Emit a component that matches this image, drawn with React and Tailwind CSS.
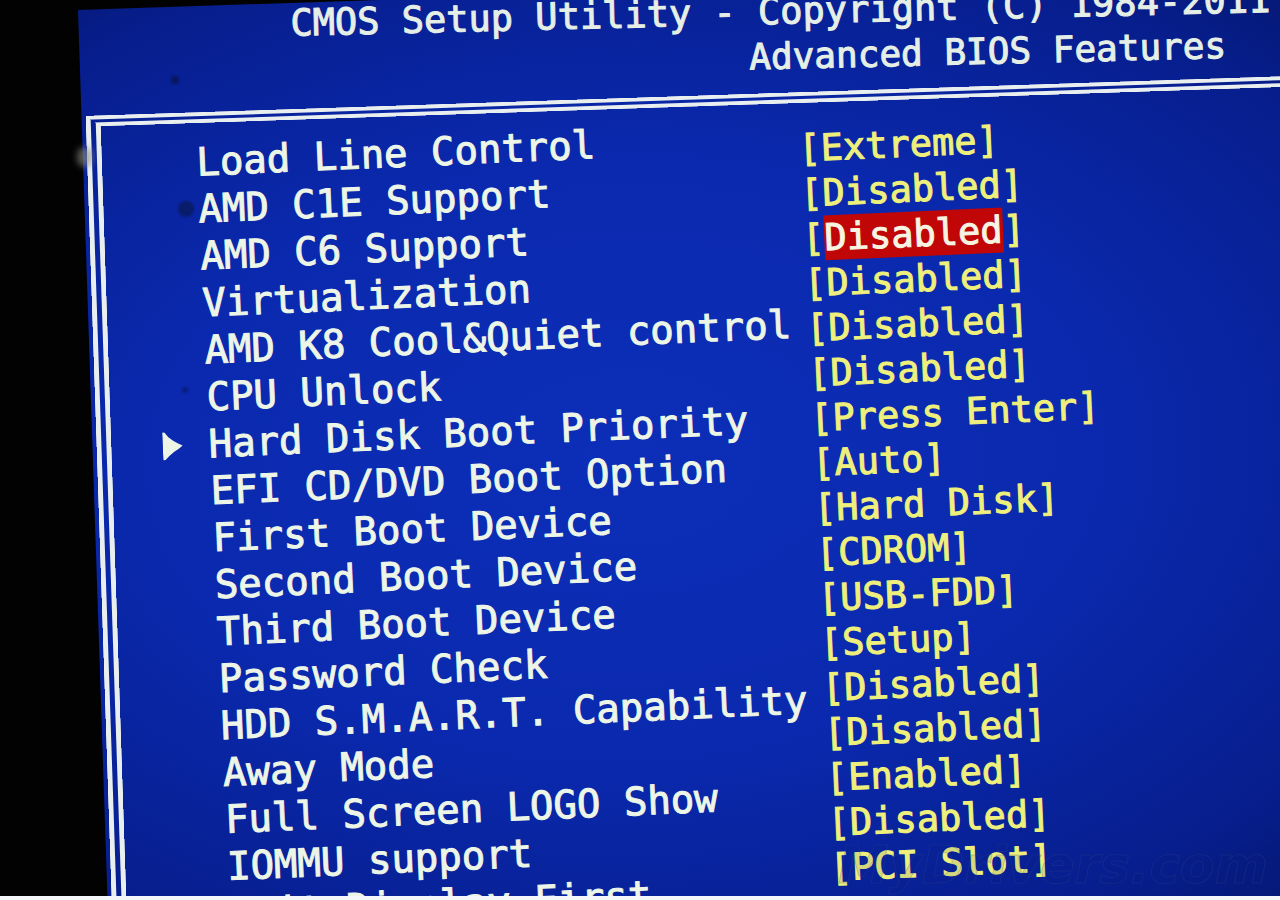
import React from "react";

const settings = [
  { label: "Load Line Control", value: "Extreme" },
  { label: "AMD C1E Support", value: "Disabled" },
  { label: "AMD C6 Support", value: "Disabled", selected: true },
  { label: "Virtualization", value: "Disabled" },
  { label: "AMD K8 Cool&Quiet control", value: "Disabled" },
  { label: "CPU Unlock", value: "Disabled" },
  { label: "Hard Disk Boot Priority", value: "Press Enter", submenu: true },
  { label: "EFI CD/DVD Boot Option", value: "Auto" },
  { label: "First Boot Device", value: "Hard Disk" },
  { label: "Second Boot Device", value: "CDROM" },
  { label: "Third Boot Device", value: "USB-FDD" },
  { label: "Password Check", value: "Setup" },
  { label: "HDD S.M.A.R.T. Capability", value: "Disabled" },
  { label: "Away Mode", value: "Disabled" },
  { label: "Full Screen LOGO Show", value: "Enabled" },
  { label: "IOMMU support", value: "Disabled" },
  { label: "Init Display First", value: "PCI Slot" },
];

function Header() {
  return (
    <header className="-mt-1 origin-top-left rotate-[0.5deg] pb-5 text-[#e6efe6]">
      <h1 className="pl-[212px] text-[37px] leading-[45px]">
        CMOS Setup Utility - Copyright (C) 1984-2011
      </h1>
      <h2 className="pl-[670px] text-[36px] leading-[45px]">Advanced BIOS Features</h2>
    </header>
  );
}

function Labels() {
  return (
    <ul className="w-[648px] shrink-0 text-[39px] leading-[47px] text-[#edf5e6]">
      {settings.map((s, i) => (
        <li key={s.label} className="flex items-center">
          <span className="w-[46px] shrink-0">
            {s.submenu && (
              <svg viewBox="0 0 20 28" className="h-7 w-5" fill="currentColor" aria-hidden="true">
                <path d="M0 0H2L6 5L11 9L16 12L20 14L16 17L11 20L6 24L2 28H0z" />
              </svg>
            )}
          </span>
          <span id={`setting-${i}`}>{s.label}</span>
        </li>
      ))}
    </ul>
  );
}

function Values() {
  return (
    <ul className="pt-[14px] text-[37px] leading-[45px] text-[#eff07c]">
      {settings.map((s, i) => (
        <li key={s.label}>
          <button type="button" aria-labelledby={`setting-${i} value-${i}`} className="block">
            <span id={`value-${i}`}>
              [
              <span className={s.selected ? "inline-block bg-[#c00606] text-[#f6f4e2]" : ""}>
                {s.value}
              </span>
              ]
            </span>
          </button>
        </li>
      ))}
    </ul>
  );
}

export default function App() {
  return (
    <div className="relative flex h-screen flex-col overflow-hidden border-b-4 border-[#f4f6fa] bg-[#020203] pl-[78px] pt-[10px]">
      <main className="-mr-16 flex grow origin-top-left rotate-[-1.9deg] flex-col whitespace-nowrap bg-[radial-gradient(ellipse_at_42%_50%,#0c2eb8_0%,#0a29ae_45%,#071e8e_80%,#04166c_100%)] font-['DejaVu_Sans_Mono',monospace] [-webkit-text-stroke:1px_currentColor]">
        <Header />
        <section className="ml-1 flex origin-top-left grow border-l-[15px] border-t-[11px] border-double border-[#e9efee] pl-12 pt-4">
          <div className="flex origin-top-left rotate-[-0.6deg]">
            <Labels />
            <Values />
          </div>
        </section>
      </main>
      <span className="absolute left-[171px] top-[76px] size-2 rounded-full bg-[#071552] opacity-80 blur-[1px]" />
      <span className="absolute left-[178px] top-[201px] size-4 rounded-full bg-[#0a1a5c] opacity-80 blur-[1px]" />
      <span className="absolute left-[182px] top-[387px] size-1.5 rounded-full bg-[#081a70] opacity-80 blur-[1px]" />
      <span className="absolute left-[77px] top-[147px] h-5 w-4 rounded-full bg-[#8d8d84] opacity-60 blur-[3px]" />
      <p className="absolute bottom-0 right-3 font-['DejaVu_Sans',sans-serif] text-[51px] font-bold italic leading-[60px] text-[#061a80]/10 [-webkit-text-stroke:1px_#3a4a8840]">
        MyDrivers.com
      </p>
    </div>
  );
}
